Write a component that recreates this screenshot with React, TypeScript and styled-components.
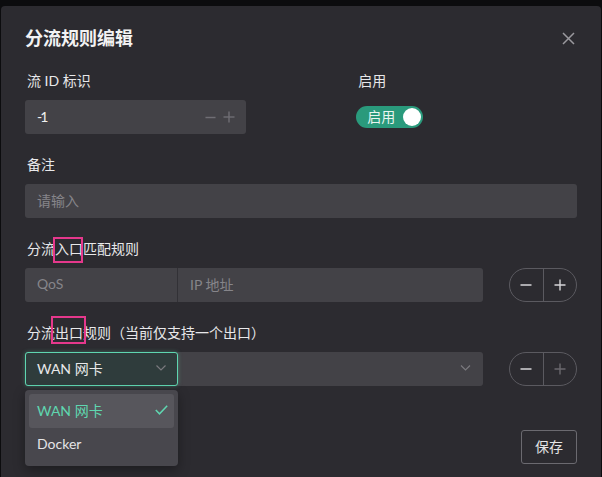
import React from "react";
import styled, { createGlobalStyle } from "styled-components";

const GlobalStyle = createGlobalStyle`
  html, body { margin: 0; padding: 0; background: #0c0c0e; }
  body { font-family: Lato, "Noto Sans CJK SC", sans-serif; }
  * { box-sizing: border-box; }
`;

const Page = styled.div`
  width: 602px;
  height: 477px;
  padding: 6px 1px 0 1px;
  background: #0c0c0e;
  overflow: hidden;
`;

const Modal = styled.div`
  width: 600px;
  height: 480px;
  background: #2c2b30;
  border-radius: 4px;
  padding: 20px 24px 0 24px;
  position: relative;
  color: #e4e4e6;
`;

const Header = styled.div`
  display: flex;
  align-items: center;
  justify-content: space-between;
  height: 24px;
  margin-bottom: 20px;
`;

const Title = styled.h2`
  margin: 0;
  font-size: 18px;
  font-weight: 700;
  line-height: 24px;
  color: #f2f2f3;
`;

const CloseBtn = styled.button`
  border: 0;
  background: none;
  padding: 0;
  width: 14px;
  height: 14px;
  margin-right: 2px;
  display: flex;
  align-items: center;
  justify-content: center;
  cursor: pointer;
`;

const Row = styled.div`
  display: grid;
  grid-template-columns: 60% 40%;
`;

const Field = styled.div`
  display: flex;
  flex-direction: column;
  margin-bottom: 20px;
`;

const Label = styled.div`
  font-size: 14px;
  line-height: 22px;
  height: 22px;
  padding-left: 2px;
  margin-bottom: 8px;
  color: #e8e8ea;
  white-space: nowrap;
`;

const Mark = styled.span<{ $t: number; $b: number; $l: number; $r: number }>`
  position: relative;
  &::after {
    content: "";
    position: absolute;
    top: ${(p) => p.$t}px;
    bottom: ${(p) => p.$b}px;
    left: ${(p) => p.$l}px;
    right: ${(p) => p.$r}px;
    border: 2px solid #e5388c;
  }
`;

const NumberBox = styled.div`
  width: 221px;
  height: 34px;
  background: #434247;
  border-radius: 3px;
  display: flex;
  align-items: center;
  padding: 0 11px 2px 12px;
  justify-content: space-between;
`;

const NumValue = styled.span`
  font-size: 14px;
  letter-spacing: -2px;
  color: #f0f0f0;
`;

const Stepper = styled.span`
  display: flex;
  align-items: center;
  gap: 7px;
  padding-top: 2px;
`;

const SwitchWrap = styled.div`
  height: 34px;
  display: flex;
  align-items: center;
`;

const Switch = styled.div`
  width: 67px;
  height: 22px;
  border-radius: 11px;
  background: #2a9a7c;
  display: flex;
  align-items: center;
  justify-content: space-between;
  padding: 0 2px 0 11px;
`;

const SwitchText = styled.span`
  font-size: 14px;
  color: #e8f5f0;
  line-height: 20px;
`;

const Knob = styled.span`
  width: 18px;
  height: 18px;
  border-radius: 50%;
  background: #ffffff;
`;

const TextInput = styled.div`
  height: 34px;
  background: #434247;
  border-radius: 3px;
  display: flex;
  align-items: center;
  padding: 0 12px 3px;
  font-size: 14px;
  color: #86858a;
`;

const GroupRow = styled.div`
  display: flex;
  align-items: center;
  gap: 26px;
`;

const InputGroup = styled.div`
  flex: 1;
  height: 34px;
  display: flex;
  background: #434247;
  border-radius: 3px;
  position: relative;
`;

const Cell = styled.div<{ $w?: number }>`
  ${(p) => (p.$w ? `width: ${p.$w}px;` : "flex: 1;")}
  height: 100%;
  display: flex;
  align-items: center;
  justify-content: space-between;
  padding: 0 12px 3px;
  font-size: 14px;
  color: #86858a;
  & + & {
    border-left: 1px solid #323136;
  }
`;

const SelectCell = styled.div`
  width: 153px;
  height: 34px;
  margin: 0;
  display: flex;
  align-items: center;
  justify-content: space-between;
  padding: 0 11px 2px;
  font-size: 14px;
  color: #e8e8ea;
  background: #2f3c3c;
  border: 1px solid #5fd6b0;
  border-radius: 3px;
  box-shadow: 0 0 4px rgba(95, 214, 176, 0.35);
  position: relative;
  z-index: 1;
`;

const PillGroup = styled.div`
  width: 68px;
  height: 34px;
  border: 1px solid #5b5a60;
  border-radius: 17px;
  display: flex;
  overflow: hidden;
`;

const PillBtn = styled.button`
  flex: 1;
  border: 0;
  background: transparent;
  padding: 0;
  display: flex;
  align-items: center;
  justify-content: center;
  & + & {
    border-left: 1px solid #5b5a60;
  }
`;

const Dropdown = styled.div`
  position: absolute;
  left: 0;
  top: 38px;
  width: 153px;
  background: #48474d;
  border-radius: 4px;
  padding: 4px;
  box-shadow: 0 4px 12px rgba(0, 0, 0, 0.35);
  z-index: 5;
`;

const Option = styled.div<{ $active?: boolean }>`
  height: 34px;
  display: flex;
  align-items: center;
  justify-content: space-between;
  padding: 0 6px 3px 8px;
  font-size: 14px;
  border-radius: 3px;
  color: ${(p) => (p.$active ? "#5fd6b0" : "#e4e4e6")};
  background: ${(p) => (p.$active ? "#57565c" : "transparent")};
`;

const SelectWrap = styled.div`
  position: relative;
  display: flex;
  flex: 1;
`;

const Footer = styled.div`
  display: flex;
  justify-content: flex-end;
  margin-top: 44px;
`;

const SaveBtn = styled.button`
  width: 56px;
  height: 34px;
  border: 1px solid #6b6a70;
  border-radius: 3px;
  background: transparent;
  color: #e4e4e6;
  font-family: Lato, "Noto Sans CJK SC", sans-serif;
  font-size: 14px;
  padding: 0 0 2px;
`;

const Minus = ({ c = "#d6d6d8", w = 12 }: { c?: string; w?: number }) => (
  <svg width={w} height={w} viewBox="0 0 12 12">
    <line x1="0.5" y1="6" x2="11.5" y2="6" stroke={c} strokeWidth="1.6" />
  </svg>
);

const Plus = ({ c = "#d6d6d8", w = 12 }: { c?: string; w?: number }) => (
  <svg width={w} height={w} viewBox="0 0 12 12">
    <line x1="0.5" y1="6" x2="11.5" y2="6" stroke={c} strokeWidth="1.4" />
    <line x1="6" y1="0.5" x2="6" y2="11.5" stroke={c} strokeWidth="1.4" />
  </svg>
);

const Chevron = ({ w = 10 }: { w?: number }) => (
  <svg width={w} height={6} viewBox="0 0 10 6">
    <polyline points="0.5,0.5 5,5 9.5,0.5" fill="none" stroke="#7a797e" strokeWidth="1.2" />
  </svg>
);

export default function App() {
  return (
    <Page>
      <GlobalStyle />
      <Modal>
        <Header>
          <Title>分流规则编辑</Title>
          <CloseBtn aria-label="close">
            <svg width="13" height="13" viewBox="0 0 13 13">
              <path d="M1 1L12 12M12 1L1 12" stroke="#9a999e" strokeWidth="1.5" />
            </svg>
          </CloseBtn>
        </Header>

        <Row>
          <Field>
            <Label>流 ID 标识</Label>
            <NumberBox>
              <NumValue>-1</NumValue>
              <Stepper>
                <Minus c="#6f6e74" w={11} />
                <Plus c="#6f6e74" w={12} />
              </Stepper>
            </NumberBox>
          </Field>
          <Field>
            <Label>启用</Label>
            <SwitchWrap>
              <Switch>
                <SwitchText>启用</SwitchText>
                <Knob />
              </Switch>
            </SwitchWrap>
          </Field>
        </Row>

        <Field>
          <Label>备注</Label>
          <TextInput>请输入</TextInput>
        </Field>

        <Field>
          <Label>
            分流<Mark $t={-3} $b={-6} $l={-2} $r={0}>入口</Mark>匹配规则
          </Label>
          <GroupRow>
            <InputGroup>
              <Cell $w={152}>QoS</Cell>
              <Cell>IP 地址</Cell>
            </InputGroup>
            <PillGroup>
              <PillBtn><Minus /></PillBtn>
              <PillBtn><Plus /></PillBtn>
            </PillGroup>
          </GroupRow>
        </Field>

        <Field>
          <Label>
            分流<Mark $t={-8} $b={-3} $l={-4} $r={-3}>出口</Mark>规则（当前仅支持一个出口）
          </Label>
          <GroupRow>
            <SelectWrap>
              <InputGroup>
                <SelectCell>
                  WAN 网卡
                  <Chevron w={10} />
                </SelectCell>
                <Cell>
                  <span />
                  <Chevron w={11} />
                </Cell>
              </InputGroup>
              <Dropdown>
                <Option $active>
                  WAN 网卡
                  <svg width="13" height="10" viewBox="0 0 13 10">
                    <polyline points="0.8,5 4.5,8.8 12.2,0.8" fill="none" stroke="#5fd6b0" strokeWidth="1.5" />
                  </svg>
                </Option>
                <Option>Docker</Option>
              </Dropdown>
            </SelectWrap>
            <PillGroup>
              <PillBtn><Minus /></PillBtn>
              <PillBtn><Plus c="#6a696e" /></PillBtn>
            </PillGroup>
          </GroupRow>
        </Field>

        <Footer>
          <SaveBtn>保存</SaveBtn>
        </Footer>
      </Modal>
    </Page>
  );
}
